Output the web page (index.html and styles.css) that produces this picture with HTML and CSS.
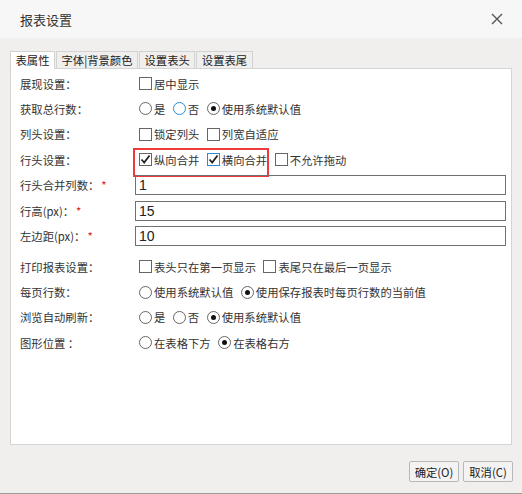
FILE: index.html
```html
<!DOCTYPE html>
<html>
<head>
<meta charset="utf-8">
<link rel="stylesheet" href="styles.css">
</head>
<body>
<div class="dialog">
  <div class="header">
    <span class="title">报表设置</span>
    <svg class="close" width="12" height="12" viewBox="0 0 12 12"><path d="M1 1L11 11M11 1L1 11" stroke="#555" stroke-width="1.4" fill="none"/></svg>
  </div>
  <div class="body">
    <div class="tabs">
      <div class="tab active">表属性</div>
      <div class="tab">字体|背景颜色</div>
      <div class="tab">设置表头</div>
      <div class="tab">设置表尾</div>
    </div>
    <div class="panel">
      <div class="row">
        <div class="label">展现设置：</div>
        <div class="ctrls"><span class="item"><span class="cb"></span>居中显示</span></div>
      </div>
      <div class="row">
        <div class="label">获取总行数：</div>
        <div class="ctrls">
          <span class="item"><span class="rd"></span>是</span>
          <span class="item"><span class="rd focus"></span>否</span>
          <span class="item"><span class="rd on"></span>使用系统默认值</span>
        </div>
      </div>
      <div class="row">
        <div class="label">列头设置：</div>
        <div class="ctrls">
          <span class="item"><span class="cb"></span>锁定列头</span>
          <span class="item"><span class="cb"></span>列宽自适应</span>
        </div>
      </div>
      <div class="row">
        <div class="label">行头设置：</div>
        <div class="ctrls">
          <span class="item"><span class="cb"><svg width="11" height="11" viewBox="0 0 11 11"><path d="M1.5 5.5L4.2 8.5L9.5 1.5" stroke="#222" stroke-width="1.8" fill="none"/></svg></span>纵向合并</span>
          <span class="item"><span class="cb focus"><svg width="11" height="11" viewBox="0 0 11 11"><path d="M1.5 5.5L4.2 8.5L9.5 1.5" stroke="#222" stroke-width="1.8" fill="none"/></svg></span>横向合并</span>
          <span class="item"><span class="cb"></span>不允许拖动</span>
          <div class="redbox"></div>
        </div>
      </div>
      <div class="row irow">
        <div class="label">行头合并列数：<span class="req">*</span></div>
        <div class="ctrls"><div class="input">1</div></div>
      </div>
      <div class="row irow">
        <div class="label">行高(px)：<span class="req">*</span></div>
        <div class="ctrls"><div class="input">15</div></div>
      </div>
      <div class="row irow">
        <div class="label">左边距(px)：<span class="req">*</span></div>
        <div class="ctrls"><div class="input">10</div></div>
      </div>
      <div class="row gap">
        <div class="label">打印报表设置：</div>
        <div class="ctrls">
          <span class="item"><span class="cb"></span>表头只在第一页显示</span>
          <span class="item"><span class="cb"></span>表尾只在最后一页显示</span>
        </div>
      </div>
      <div class="row">
        <div class="label">每页行数：</div>
        <div class="ctrls">
          <span class="item"><span class="rd"></span>使用系统默认值</span>
          <span class="item"><span class="rd on"></span>使用保存报表时每页行数的当前值</span>
        </div>
      </div>
      <div class="row">
        <div class="label">浏览自动刷新：</div>
        <div class="ctrls">
          <span class="item"><span class="rd"></span>是</span>
          <span class="item"><span class="rd"></span>否</span>
          <span class="item"><span class="rd on"></span>使用系统默认值</span>
        </div>
      </div>
      <div class="row">
        <div class="label">图形位置 ：</div>
        <div class="ctrls">
          <span class="item"><span class="rd"></span>在表格下方</span>
          <span class="item"><span class="rd on"></span>在表格右方</span>
        </div>
      </div>
    </div>
    <div class="footer">
      <button class="btn">确定(O)</button>
      <button class="btn">取消(C)</button>
    </div>
  </div>
</div>
</body>
</html>
```
FILE: styles.css
```css
html, body {
  margin: 0;
  padding: 0;
}
body {
  width: 522px;
  height: 494px;
  overflow: hidden;
  font-family: "Noto Sans CJK SC", "Liberation Sans", sans-serif;
  font-size: 11.33px;
  color: #333;
}
.dialog {
  width: 522px;
  height: 494px;
  box-sizing: border-box;
  border-bottom: 1px solid #9a9a9a;
  background: #f0efed;
  display: flex;
  flex-direction: column;
}
.header {
  height: 38px;
  background: #f7f7f7;
  display: flex;
  align-items: center;
  justify-content: space-between;
  padding: 0 19px 0 20px;
  flex-shrink: 0;
}
.title {
  font-size: 13px;
  color: #333;
}
.body {
  padding: 13px 10px 0 10px;
  display: flex;
  flex-direction: column;
  flex: 1;
}
.tabs {
  display: flex;
  height: 17px;
  position: relative;
  z-index: 1;
}
.tab {
  border: 1px solid #d2d2d2;
  border-bottom: none;
  margin-right: 1px;
  padding: 0 4.5px;
  line-height: 16px;
  height: 17px;
  box-sizing: border-box;
  background: #f0efed;
  color: #222;
}
.tab.active {
  background: #fff;
  height: 18px;
}
.panel {
  background: #fff;
  border: 1px solid #d4d4d4;
  height: 377px;
  box-sizing: border-box;
  padding: 2px 0 0 9px;
}
.row {
  display: flex;
  align-items: center;
  height: 25.3px;
}
.irow {
  height: 25.7px;
}
.row.gap {
  margin-top: 5px;
}
.label {
  width: 116px;
  flex-shrink: 0;
  color: #333;
}
.req {
  color: #e02020;
  margin-left: 2px;
}
.ctrls {
  display: flex;
  align-items: center;
  position: relative;
  flex: 1;
  padding-left: 3px;
}
.item {
  display: inline-flex;
  align-items: center;
  margin-right: 7.5px;
  color: #333;
}
.cb {
  width: 13px;
  height: 13px;
  box-sizing: border-box;
  border: 1px solid #666;
  background: #fff;
  margin-right: 2px;
  display: inline-flex;
  align-items: center;
  justify-content: center;
}
.cb.focus {
  border-color: #2a8ad8;
}
.rd {
  width: 13px;
  height: 13px;
  box-sizing: border-box;
  border: 1px solid #666;
  border-radius: 50%;
  background: #fff;
  margin-right: 2px;
  display: inline-flex;
  align-items: center;
  justify-content: center;
}
.rd.focus {
  border-color: #2a8ad8;
}
.rd.on::after {
  content: "";
  width: 5px;
  height: 5px;
  border-radius: 50%;
  background: #111;
}
.redbox {
  position: absolute;
  left: -3px;
  top: -4px;
  width: 136px;
  height: 29px;
  border: 2px solid #ee3a3a;
  box-sizing: border-box;
  pointer-events: none;
}
.input {
  margin-left: -4px;
  width: 371px;
  height: 20px;
  box-sizing: border-box;
  border: 1px solid #707070;
  padding-left: 3px;
  line-height: 18px;
  font-family: "Liberation Sans", sans-serif;
  font-size: 14px;
  color: #222;
}
.footer {
  display: flex;
  justify-content: flex-end;
  gap: 4px;
  padding-top: 16px;
  margin-right: -1px;
}
.btn {
  width: 50px;
  height: 21px;
  padding: 0;
  border: 1px solid #b8b8b8;
  border-radius: 2px;
  background: #f3f3f3;
  font-family: "Noto Sans CJK SC", "Liberation Sans", sans-serif;
  font-size: 11.33px;
  color: #222;
}
```
